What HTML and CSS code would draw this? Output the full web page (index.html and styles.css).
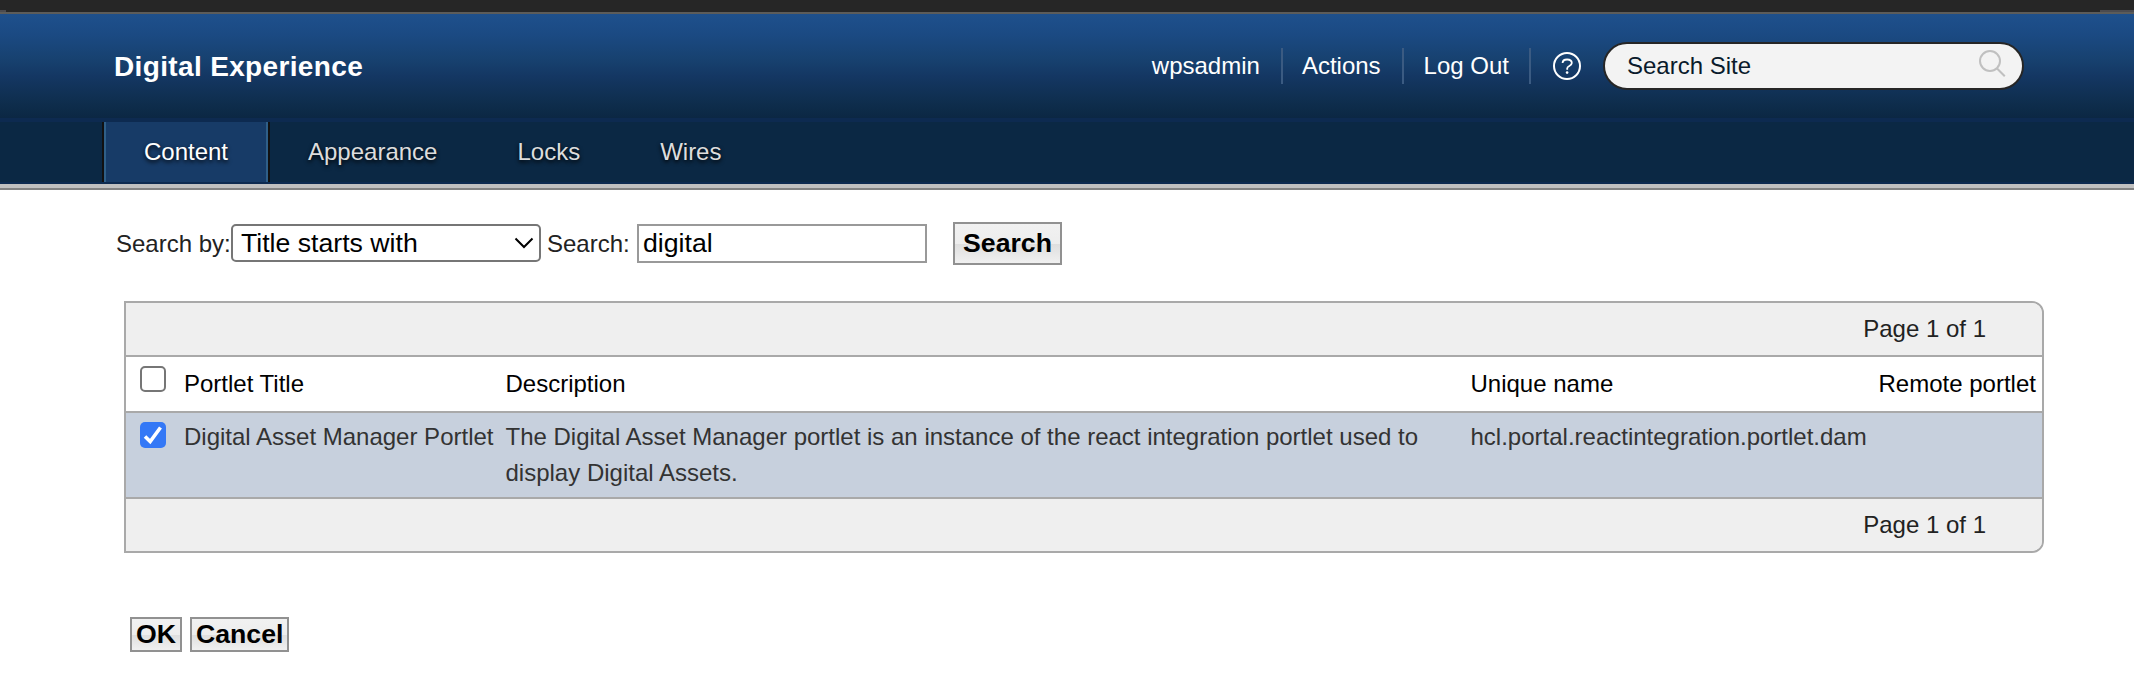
FILE: index.html
```html
<!DOCTYPE html>
<html lang="en">
<head>
<meta charset="utf-8">
<title>Digital Experience</title>
<link rel="stylesheet" href="styles.css">
</head>
<body>
<div class="chrome"><i class="chrome-left"></i><i class="chrome-right"></i></div>
<header class="banner">
  <div class="brand">Digital Experience</div>
  <nav class="actions">
    <a class="action user">wpsadmin</a>
    <a class="action act">Actions</a>
    <a class="action out">Log Out</a>
    <svg class="help" width="30" height="30" viewBox="0 0 30 30" fill="none" stroke="#fff" stroke-width="2">
      <circle cx="15" cy="15" r="13"/>
      <path stroke-width="1.800" d="M10.600 12c0-2.300 1.700-3.500 4.500-3.500 2.900 0 4.700 1.300 4.700 3.600 0 3.300-4.600 2.600-4.600 5.400v1.300"/>
      <circle cx="15.100" cy="21.600" r="1.300" fill="#fff" stroke="none"/>
    </svg>
    <div class="site-search">
      <span>Search Site</span>
      <svg width="30" height="32" viewBox="0 0 30 32" fill="none" stroke="#c0c0c0" stroke-width="2">
        <circle cx="13" cy="13" r="10"/>
        <path d="M19.8 20.2l8 8"/>
      </svg>
    </div>
  </nav>
</header>
<nav class="tabs">
  <a class="tab active">Content</a>
  <a class="tab">Appearance</a>
  <a class="tab">Locks</a>
  <a class="tab">Wires</a>
</nav>
<main class="page">
  <form class="search-form">
    <label class="by">Search by:</label>
    <div class="select"><span>Title starts with</span>
      <svg width="20" height="12" viewBox="0 0 20 12" fill="none" stroke="#000" stroke-width="2"><path d="M1.5 1.5L10 10l8.500-8.500"/></svg>
    </div>
    <label class="for">Search:</label>
    <input class="query" type="text" value="digital">
    <button class="btn search-btn" type="button">Search</button>
  </form>
  <section class="results">
    <div class="pager">Page 1 of 1</div>
    <div class="row head">
      <span class="check"></span>
      <span>Portlet Title</span>
      <span>Description</span>
      <span>Unique name</span>
      <span>Remote portlet</span>
    </div>
    <div class="row item">
      <span class="check checked"><svg width="26" height="26" viewBox="0 0 26 26" fill="none" stroke="#fff" stroke-width="3.600"><path d="M5 14.500l5.200 5L20.500 5.500"/></svg></span>
      <span>Digital Asset Manager Portlet</span>
      <span>The Digital Asset Manager portlet is an instance of the react integration portlet used to display Digital Assets.</span>
      <span>hcl.portal.reactintegration.portlet.dam</span>
      <span></span>
    </div>
    <div class="pager last">Page 1 of 1</div>
  </section>
  <div class="buttons">
    <button class="btn" type="button">OK</button>
    <button class="btn" type="button">Cancel</button>
  </div>
</main>
</body>
</html>
```
FILE: styles.css
```css
* { box-sizing: border-box; }
body {
  margin: 0;
  background: #fff;
  font: 24px/36px "Liberation Sans", Arial, sans-serif;
  color: #222;
}
.chrome {
  height: 14px;
  background: #262626;
  border-bottom: 2px solid #5c5c5a;
  display: flex;
  justify-content: space-between;
  align-items: flex-end;
}
.chrome i { height: 2px; background: #4b4b4f; }
.chrome-left { width: 6px; }
.chrome-right { width: 34px; }
.banner {
  height: 108px;
  display: flex;
  justify-content: space-between;
  padding: 0 110px 0 114px;
  background: linear-gradient(#1e508c 0, #1b4a83 20px, #17416f 46px, #143763 62px, #0e2d4c 90px, #0b2743 104px);
  border-bottom: 4px solid #0d2a50;
}
.brand {
  height: 32px;
  margin-top: 36px;
  overflow: hidden;
  font-size: 28px;
  line-height: 34px;
  letter-spacing: .35px;
  font-weight: bold;
  color: #fff;
}
.actions {
  display: flex;
  align-items: center;
  height: 48px;
  margin-top: 28px;
  color: #fff;
}
.action {
  height: 36px;
  line-height: 35px;
  border-right: 2px solid #3b5b82;
  padding-right: 21px;
  margin-right: 20px;
  white-space: nowrap;
}
.user { margin-right: 19px; }
.out { padding-right: 20px; margin-right: 21px; }
.help { margin-right: 21px; }
.site-search {
  width: 421px;
  height: 48px;
  border: 2px solid #262626;
  border-radius: 24px;
  background: #f3f3f3;
  color: #0a1a2b;
  padding: 0 15px 0 22px;
  display: flex;
  justify-content: space-between;
  line-height: 43px;
}
.site-search svg { margin-top: 4px; }
.tabs {
  height: 66px;
  padding-left: 102px;
  display: flex;
  background: #0b2844;
  border-bottom: 4px solid #c0c0c0;
  box-shadow: inset 0 -2px #0d2a50, 0 2px #828282;
}
.tab {
  height: 60px;
  line-height: 59px;
  padding: 0 40px;
  color: #ddd;
  text-shadow: 0 2px 4px #000;
}
.tab.active {
  width: 168px;
  padding: 0;
  text-align: center;
  background: #173b67;
  color: #fff;
  border: solid #111;
  border-width: 0 2px;
  box-shadow: inset 2px 0 #2f5f88, inset -2px 0 #2f5f88;
}
.tab.active + .tab { padding-left: 38px; }
.page { padding: 34px 90px 0 116px; }
.search-form {
  display: flex;
  height: 43px;
  align-items: flex-start;
  white-space: nowrap;
}
.by { width: 115px; margin-top: 4px; }
.select {
  width: 310px;
  height: 38px;
  margin-top: 2px;
  padding: 0 5px 0 8px;
  border: 2px solid #767676;
  border-radius: 5px;
  display: flex;
  justify-content: space-between;
  align-items: center;
  font-size: 26.670px;
  line-height: 34px;
  color: #000;
}
.for { width: 90px; margin: 4px 0 0 6px; }
.query {
  width: 290px;
  height: 39px;
  margin: 2px 26px 0 0;
  padding: 0 4px;
  border: 2px solid #999;
  font: 26.670px "Liberation Sans", Arial, sans-serif;
  color: #000;
}
.btn {
  height: 35px;
  padding: 0 4px;
  border: 2px solid #919191;
  background: linear-gradient(#f1f1f1 0, #ededed 50%, #dedede 51%, #f0f0f0 100%);
  font: bold 26.670px/31px "Liberation Sans", Arial, sans-serif;
  color: #000;
}
.search-btn { width: 109px; height: 43px; padding: 0; }
.results {
  width: 1920px;
  margin: 36px 0 0 8px;
  border: 2px solid #a9a9a9;
  border-radius: 0 12px 12px 0;
  overflow: hidden;
}
.pager {
  height: 54px;
  background: #efefef;
  border-bottom: 2px solid #a9a9a9;
  text-align: right;
  padding: 8px 56px 0 0;
}
.pager.last { height: 52px; border: 0; }
.row {
  display: grid;
  grid-template-columns: 44px 321.5px 965px 408px 1fr;
  padding-left: 14px;
  border-bottom: 2px solid #a9a9a9;
}
.row > span { white-space: nowrap; }
.head { height: 56px; padding-top: 9px; color: #000; }
.item { height: 86px; padding-top: 6px; background: #c7d0dd; color: #333; }
.item > span:nth-child(3) { white-space: normal; padding-right: 40px; }
.check {
  width: 26px;
  height: 26px;
  border: 2px solid #767676;
  border-radius: 5px;
  background: #fff;
}
.check.checked { margin-top: 3px; border: 0; background: #3478f6; }
.check svg { display: block; }
.buttons {
  display: flex;
  gap: 8px;
  margin: 64px 0 0 14px;
}
```
